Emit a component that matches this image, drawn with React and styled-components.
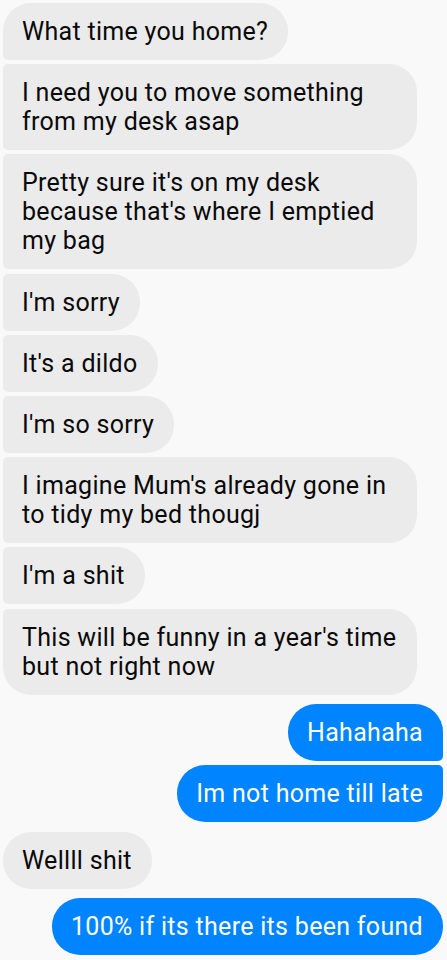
import React from "react";
import styled, { createGlobalStyle, css } from "styled-components";

const GlobalStyle = createGlobalStyle`
  html, body {
    margin: 0;
    padding: 0;
    background: #f9f9f9;
  }
  body {
    font-family: Roboto, "Noto Sans", "Liberation Sans", sans-serif;
  }
`;

const Thread = styled.div`
  width: 447px;
  height: 960px;
  overflow: hidden;
  box-sizing: border-box;
  padding: 3px 4px 0 3px;
  display: flex;
  flex-direction: column;
  background: #f9f9f9;
`;

const Group = styled.div`
  display: flex;
  flex-direction: column;
  align-items: ${(p) => (p.mine ? "flex-end" : "flex-start")};
  gap: 4.2px;
  margin-bottom: 9.5px;
`;

const BIG = "28px";
const SMALL = "5px";

// corner rounding depends on where the bubble sits in its group
const theirCorners = (pos) => {
  const top = pos === "first" || pos === "single" ? BIG : SMALL;
  const bottom = pos === "last" || pos === "single" ? BIG : SMALL;
  return css`
    border-radius: ${top} ${BIG} ${BIG} ${bottom};
  `;
};

const myCorners = (pos) => {
  const top = pos === "first" || pos === "single" ? BIG : SMALL;
  const bottom = pos === "last" || pos === "single" ? BIG : SMALL;
  return css`
    border-radius: ${BIG} ${top} ${bottom} ${BIG};
  `;
};

const Bubble = styled.div`
  max-width: 375px;
  padding: 14px 20px 14px 19px;
  font-size: 25px;
  line-height: 29px;
  letter-spacing: 0.3px;
  background: ${(p) => (p.mine ? "#0084ff" : "#ebebeb")};
  color: ${(p) => (p.mine ? "#ffffff" : "#0a0a0a")};
  ${(p) => (p.mine ? myCorners(p.pos) : theirCorners(p.pos))}
`;

const groups = [
  {
    mine: false,
    lines: [
      "What time you home?",
      "I need you to move something from my desk asap",
      "Pretty sure it's on my desk because that's where I emptied my bag",
      "I'm sorry",
      "It's a dildo",
      "I'm so sorry",
      "I imagine Mum's already gone in to tidy my bed thougj",
      "I'm a shit",
      "This will be funny in a year's time but not right now",
    ],
  },
  { mine: true, lines: ["Hahahaha", "Im not home till late"] },
  { mine: false, lines: ["Wellll shit"] },
  { mine: true, lines: ["100% if its there its been found"] },
];

const position = (i, n) => {
  if (n === 1) return "single";
  if (i === 0) return "first";
  if (i === n - 1) return "last";
  return "middle";
};

const App = () => {
  return (
    <>
      <GlobalStyle />
      <Thread>
        {groups.map((g, gi) => (
          <Group key={gi} mine={g.mine}>
            {g.lines.map((text, i) => (
              <Bubble key={i} mine={g.mine} pos={position(i, g.lines.length)}>
                {text}
              </Bubble>
            ))}
          </Group>
        ))}
      </Thread>
    </>
  );
};

export default App;
